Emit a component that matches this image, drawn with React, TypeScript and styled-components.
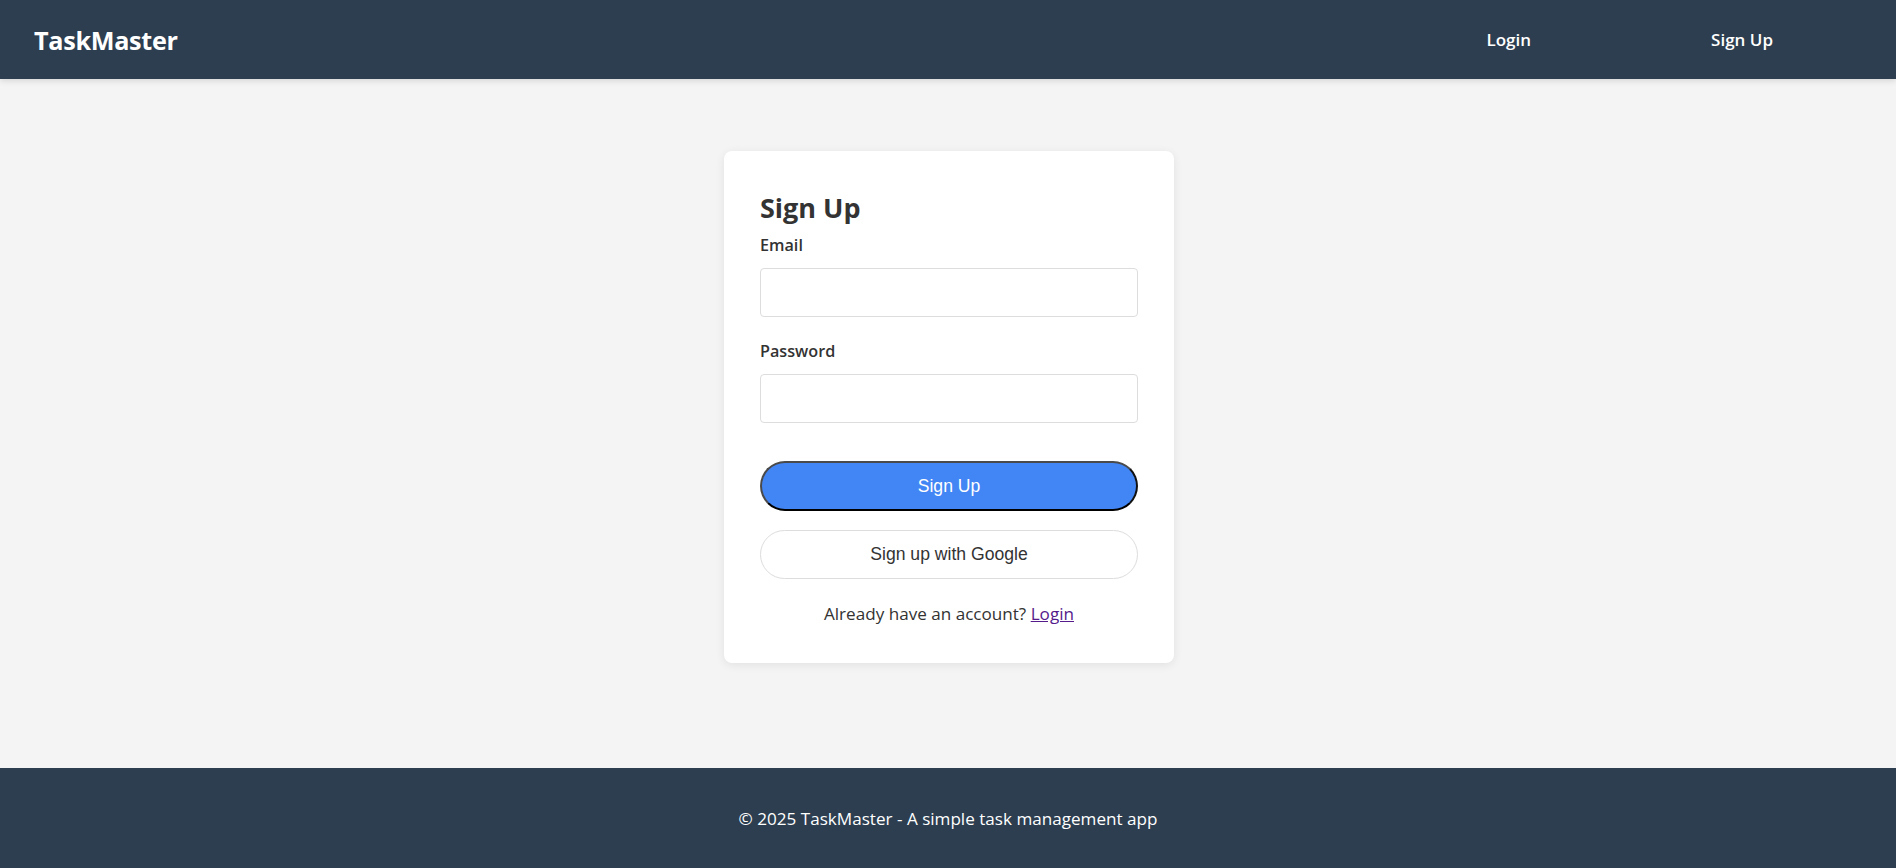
import React from "react";
import styled, { createGlobalStyle } from "styled-components";

const GlobalStyle = createGlobalStyle`
  * { box-sizing: border-box; }
  html, body { margin: 0; padding: 0; }
  body {
    font-family: "Open Sans", "Noto Sans", sans-serif;
    background: #f4f4f4;
    color: #333;
  }
`;

const Page = styled.div`
  min-height: 868px;
  display: flex;
  flex-direction: column;
`;

const Header = styled.header`
  height: 79px;
  background: #2c3e50;
  display: flex;
  align-items: center;
  justify-content: space-between;
  padding: 0 33px 0 34px;
  box-shadow: 0 2px 6px rgba(0, 0, 0, 0.12);
  position: relative;
  z-index: 1;
`;

const Logo = styled.div`
  color: #fff;
  font-size: 25.2px;
  font-weight: 700;
  letter-spacing: -0.3px;
`;

const Nav = styled.nav`
  display: flex;
  align-items: center;
`;

const NavLink = styled.a`
  color: #fff;
  text-decoration: none;
  font-size: 17px;
  font-weight: 600;
  padding: 0 90px;
`;

const Main = styled.main`
  flex: 1;
  display: flex;
  justify-content: center;
  align-items: flex-start;
  padding: 72px 0 0 2px;
`;

const Card = styled.div`
  width: 450px;
  background: #fff;
  border-radius: 8px;
  box-shadow: 0 2px 10px rgba(0, 0, 0, 0.08);
  padding: 38px 36px 38px;
  display: flex;
  flex-direction: column;
`;

const Title = styled.h2`
  margin: 0 0 7px;
  font-size: 27px;
  font-weight: 700;
  color: #333;
  line-height: 38px;
`;

const Field = styled.div`
  display: flex;
  flex-direction: column;
  margin-bottom: 23px;
`;

const Label = styled.label`
  font-size: 16.2px;
  font-weight: 600;
  color: #333;
  line-height: 23px;
  margin-bottom: 11px;
`;

const Input = styled.input`
  height: 49px;
  width: 100%;
  border: 1px solid #ddd;
  border-radius: 4px;
  padding: 0 12px;
  font-size: 16px;
  background: #fff;
  outline: none;
`;

const Button = styled.button<{ $variant: "primary" | "google" }>`
  width: 100%;
  font-family: "Liberation Sans", Arial, sans-serif;
  font-size: 17.6px;
  border-radius: 999px;
  cursor: pointer;
  display: flex;
  align-items: center;
  justify-content: center;
  ${(p) =>
    p.$variant === "primary"
      ? `
    height: 50px;
    margin-top: 15px;
    background: #4285f4;
    color: #fff;
    border: 2px solid;
    border-color: #4a4a4a #111 #000 #4a4a4a;
  `
      : `
    height: 49px;
    margin-top: 19px;
    background: #fff;
    color: #333;
    border: 1px solid #ddd;
  `}
`;

const SwitchText = styled.p`
  margin: 23px 0 0;
  text-align: center;
  font-size: 17.1px;
  line-height: 23px;
  color: #333;

  a {
    color: #551a8b;
    text-decoration: underline;
  }
`;

const Footer = styled.footer`
  height: 100px;
  background: #2c3e50;
  color: #fff;
  display: flex;
  align-items: center;
  justify-content: center;
  font-size: 17.1px;
`;

export default function App() {
  return (
    <>
      <GlobalStyle />
      <Page>
        <Header>
          <Logo>TaskMaster</Logo>
          <Nav>
            <NavLink href="#">Login</NavLink>
            <NavLink href="#">Sign Up</NavLink>
          </Nav>
        </Header>
        <Main>
          <Card>
            <Title>Sign Up</Title>
            <Field>
              <Label htmlFor="email">Email</Label>
              <Input id="email" type="email" />
            </Field>
            <Field>
              <Label htmlFor="password">Password</Label>
              <Input id="password" type="password" />
            </Field>
            <Button $variant="primary">Sign Up</Button>
            <Button $variant="google">Sign up with Google</Button>
            <SwitchText>
              Already have an account? <a href="#">Login</a>
            </SwitchText>
          </Card>
        </Main>
        <Footer>© 2025 TaskMaster - A simple task management app</Footer>
      </Page>
    </>
  );
}
